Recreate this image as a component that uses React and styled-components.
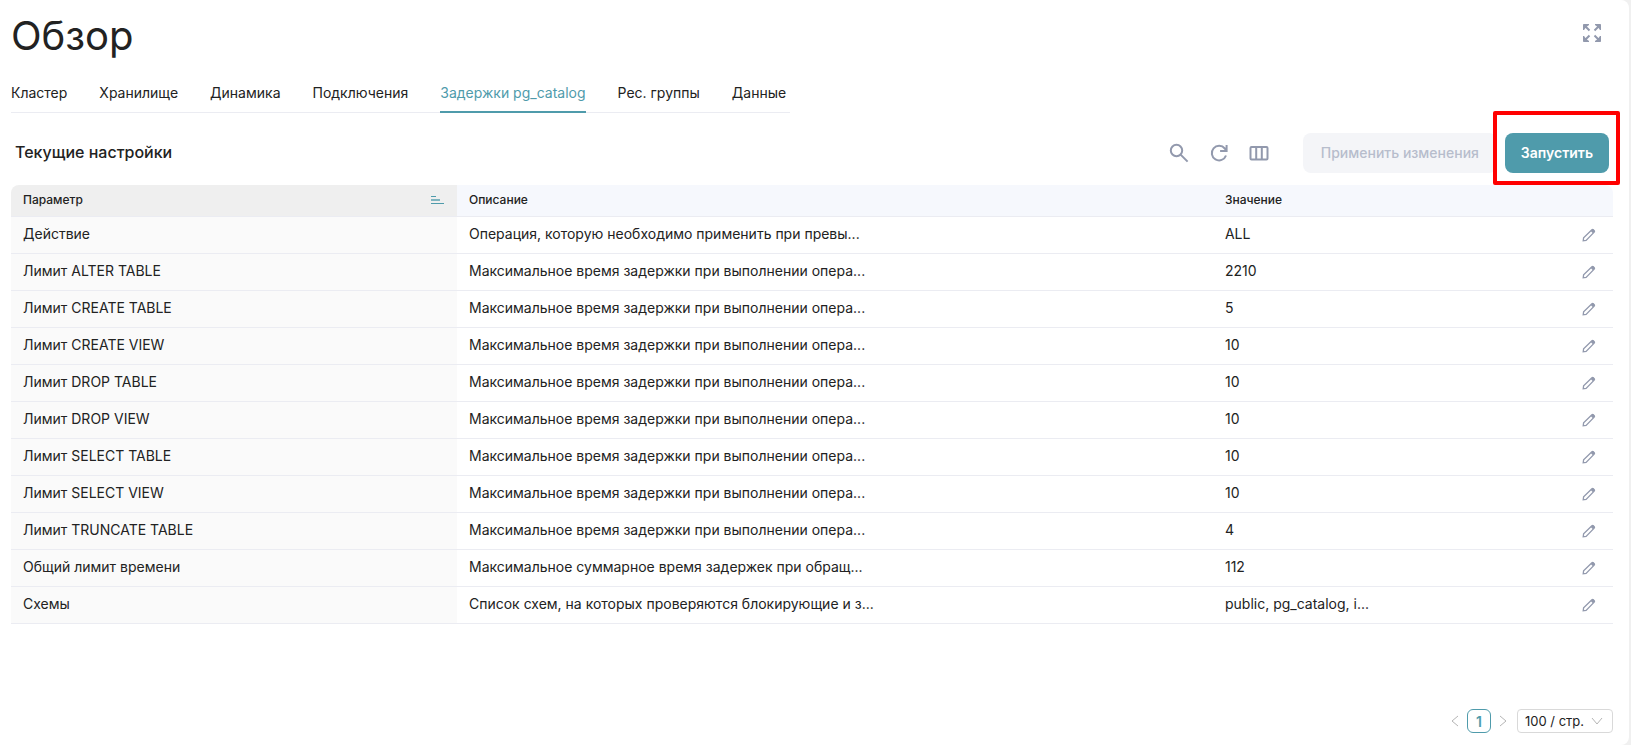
import React, { useState } from 'react'
import styled, { createGlobalStyle, ThemeProvider } from 'styled-components'

const theme = {
  text: '#222222',
  textDisabled: '#b7bdcc',
  accent: '#4f9bab',
  icon: '#9299ad',
  line: '#ebecf2',
  head: '#f6f8fd',
  headSorted: '#efefef',
  cellSorted: '#fafafa',
};

const GlobalStyle = createGlobalStyle`
  * {
    box-sizing: border-box;
  }
  body {
    margin: 0;
    background-color: #f0f0f0;
    font-family: Inter, "Open Sans", sans-serif;
    font-size: 14px;
    color: ${theme.text};
  }
  button, select {
    font-family: inherit;
    font-size: inherit;
    color: inherit;
  }
`;
const Page = styled.main`
  display: flex;
  flex-direction: column;
  min-height: 100vh;
  margin-right: 2px;
  padding: 12px 16px 12px 11px;
  background-color: #ffffff;
  border-radius: 0 8px 8px 0;
`;
const Header = styled.header`
  display: flex;
  justify-content: space-between;
  padding-right: 9px;
`;
const Title = styled.h1`
  margin: 0;
  font-size: 40px;
  font-weight: 400;
  line-height: 48px;
`;
const IconButton = styled.button`
  display: flex;
  align-items: center;
  justify-content: center;
  width: 24px;
  height: 24px;
  padding: 0;
  border: none;
  background-color: transparent;
  color: ${({ theme }) => theme.icon};
  cursor: pointer;
`;
const FullScreen = styled(IconButton)`
  margin-top: 9px;
`;
const Tabs = styled.nav`
  display: flex;
  align-self: flex-start;
  gap: 32px;
  margin-top: 17px;
  padding-right: 4px;
  border-bottom: 1px solid ${({ theme }) => theme.line};
`;
const Tab = styled.a`
  height: 36px;
  margin-bottom: -1px;
  line-height: 32px;
  text-decoration: none;
  color: ${({ theme, $active }) => ($active ? theme.accent : theme.text)};
  border-bottom: 2px solid ${({ theme, $active }) => ($active ? theme.accent : 'transparent')};
`;
const Toolbar = styled.div`
  display: flex;
  align-items: center;
  justify-content: space-between;
  padding: 20px 4px 12px;
`;
const SubTitle = styled.h2`
  margin: 0;
  padding-bottom: 2px;
  font-size: 16px;
  font-weight: 500;
`;
const Actions = styled.div`
  display: flex;
  align-items: center;
  gap: 8px;
`;
const Icons = styled.div`
  display: flex;
  gap: 16px;
  margin-right: 24px;
`;
const Button = styled.button`
  height: 40px;
  min-width: ${({ $primary }) => ($primary ? 104 : 194)}px;
  padding: 0 16px 2px;
  border: none;
  border-radius: 8px;
  font-weight: ${({ $primary }) => ($primary ? 600 : 500)};
  white-space: nowrap;
  background-color: ${({ theme, $primary }) => ($primary ? theme.accent : '#f4f5f8')};
  color: ${({ theme, $primary }) => ($primary ? '#ffffff' : theme.textDisabled)};
`;
const Highlight = styled.div`
  position: relative;
  &::after {
    content: "";
    position: absolute;
    inset: -22px -11px -12px -12px;
    border: 4px solid #ff0000;
    border-radius: 2px;
    pointer-events: none;
  }
`;
const Table = styled.table`
  width: 100%;
  table-layout: fixed;
  border-collapse: separate;
  border-spacing: 0;
`;
const Col = styled.col`
  width: ${({ $width }) => $width};
`;
const Th = styled.th`
  height: 32px;
  padding: 0 12px 2px;
  font-size: 12px;
  font-weight: 500;
  line-height: 16px;
  text-align: left;
  background-color: ${({ theme, $sorted }) => ($sorted ? theme.headSorted : theme.head)};
  border-bottom: 1px solid ${({ theme }) => theme.line};
  &:first-child {
    border-top-left-radius: 8px;
  }
  &:last-child {
    border-top-right-radius: 8px;
  }
`;
const Sorter = styled.div`
  display: flex;
  align-items: center;
  justify-content: space-between;
`;
const Td = styled.td`
  height: 37px;
  padding: 0 12px 2px;
  line-height: 20px;
  white-space: nowrap;
  background-color: ${({ theme, $sorted }) => ($sorted ? theme.cellSorted : 'transparent')};
  border-bottom: 1px solid ${({ theme }) => theme.line};
`;
const EditCell = styled(Td)`
  padding-bottom: 0;
`;
const Pagination = styled.div`
  display: flex;
  align-items: center;
  justify-content: flex-end;
  margin-top: auto;
`;
const PageArrow = styled(IconButton)`
  color: #b5b5b5;
`;
const PageNumber = styled.button`
  width: 24px;
  height: 24px;
  padding: 0;
  border: 1px solid ${({ theme }) => theme.accent};
  border-radius: 6px;
  background-color: #ffffff;
  font-weight: 600;
  color: ${({ theme }) => theme.accent};
`;
const SizeLabel = styled.label`
  display: flex;
  align-items: center;
  margin-left: 2px;
  color: #b5b5b5;
`;
const SizeSelect = styled.select`
  appearance: none;
  width: 96px;
  height: 24px;
  padding: 0 7px;
  border: 1px solid #d9d9d9;
  border-radius: 4px;
  background-color: #ffffff;
  font-size: 13px;
  color: ${({ theme }) => theme.text};
`;
const Arrow = styled.svg`
  margin-left: -22px;
  margin-right: 10px;
  pointer-events: none;
`;

const tabs = ['Кластер', 'Хранилище', 'Динамика', 'Подключения', 'Задержки pg_catalog', 'Рес. группы', 'Данные'];

const limitText = 'Максимальное время задержки при выполнении опера...';
const rows = [
  { name: 'Действие', text: 'Операция, которую необходимо применить при превы...', value: 'ALL' },
  { name: 'Лимит ALTER TABLE', text: limitText, value: '2210' },
  { name: 'Лимит CREATE TABLE', text: limitText, value: '5' },
  { name: 'Лимит CREATE VIEW', text: limitText, value: '10' },
  { name: 'Лимит DROP TABLE', text: limitText, value: '10' },
  { name: 'Лимит DROP VIEW', text: limitText, value: '10' },
  { name: 'Лимит SELECT TABLE', text: limitText, value: '10' },
  { name: 'Лимит SELECT VIEW', text: limitText, value: '10' },
  { name: 'Лимит TRUNCATE TABLE', text: limitText, value: '4' },
  { name: 'Общий лимит времени', text: 'Максимальное суммарное время задержек при обращ...', value: '112' },
  { name: 'Схемы', text: 'Список схем, на которых проверяются блокирующие и з...', value: 'public, pg_catalog, i...' },
];

const ExpandIcon = () => (
  <svg width="20" height="20" viewBox="0 0 20 20" fill="currentColor" stroke="currentColor">
    <path d="M1.500 1.500h5.500l-2 1.500L3 5 1.500 7zM18.500 1.500H13l2 1.500L17 5l1.500 2zM1.500 18.500h5.500l-2-1.500L3 15 1.500 13zM18.500 18.500H13l2-1.500L17 15l1.500-2z" />
    <path d="M3 3l4.500 4.500M17 3l-4.500 4.500M3 17l4.500-4.500M17 17l-4.500-4.500" strokeWidth="2" />
  </svg>
)
const SearchIcon = () => (
  <svg width="20" height="20" viewBox="0 0 20 20" fill="none" stroke="currentColor" strokeWidth="2">
    <circle cx="7.500" cy="7.500" r="5.700" />
    <path d="M11.600 11.600l7 7" />
  </svg>
)
const RefreshIcon = () => (
  <svg width="20" height="20" viewBox="0 0 20 20" fill="none" stroke="currentColor" strokeWidth="2">
    <path d="M17 12.500A7.300 7.300 0 1 1 15.800 5.500L17 7.500M17.600 2v6h-6.500" />
  </svg>
)
const ColumnsIcon = () => (
  <svg width="20" height="20" viewBox="0 0 20 20" fill="none" stroke="currentColor" strokeWidth="2">
    <rect x="1.500" y="4" width="17" height="12.500" rx="1" />
    <path d="M7.200 4v12.500M12.800 4v12.500" />
  </svg>
)
const SortIcon = () => (
  <svg width="14" height="10" viewBox="0 0 14 10" fill="#4f9bab">
    <path d="M0 1h5v1H0zM0 8h13v1H0z" />
    <path d="M0 4h9v2H0z" opacity="0.7" />
  </svg>
)
const PencilIcon = () => (
  <svg width="14" height="14" viewBox="0 0 14 14" fill="none" stroke="currentColor" strokeWidth="1.300">
    <path d="M1.200 12.800l.4-2.900 8.300-8.100a1 1 0 0 1 1.400 0l.9.9a1 1 0 0 1 0 1.400L4.100 12.400z" />
    <path d="M9.400 2.400l2.200 2.200M10.400 1.900l1.700 1.700" strokeWidth="2" />
  </svg>
)
const Chevron = ({ d }) => (
  <svg width="8" height="12" viewBox="0 0 8 12" fill="none" stroke="currentColor">
    <path d={d} />
  </svg>
)

const App = () => {
  const [active, setActive] = useState('Задержки pg_catalog')
  const [size, setSize] = useState('100')

  return (
    <ThemeProvider theme={theme}>
      <GlobalStyle />
      <Page>
        <Header>
          <Title>Обзор</Title>
          <FullScreen aria-label="Во весь экран"><ExpandIcon /></FullScreen>
        </Header>
        <Tabs>
          {tabs.map((tab) => (
            <Tab key={tab} href="#" $active={tab === active} onClick={() => setActive(tab)}>{tab}</Tab>
          ))}
        </Tabs>
        <Toolbar>
          <SubTitle>Текущие настройки</SubTitle>
          <Actions>
            <Icons>
              <IconButton aria-label="Поиск"><SearchIcon /></IconButton>
              <IconButton aria-label="Обновить"><RefreshIcon /></IconButton>
              <IconButton aria-label="Столбцы"><ColumnsIcon /></IconButton>
            </Icons>
            <Button disabled>Применить изменения</Button>
            <Highlight>
              <Button $primary>Запустить</Button>
            </Highlight>
          </Actions>
        </Toolbar>
        <Table>
          <colgroup>
            <Col $width="27.84%" />
            <Col $width="47.19%" />
            <Col />
            <Col $width="48px" />
          </colgroup>
          <thead>
            <tr>
              <Th $sorted>
                <Sorter>Параметр <SortIcon /></Sorter>
              </Th>
              <Th>Описание</Th>
              <Th>Значение</Th>
              <Th />
            </tr>
          </thead>
          <tbody>
            {rows.map((row) => (
              <tr key={row.name}>
                <Td $sorted>{row.name}</Td>
                <Td>{row.text}</Td>
                <Td>{row.value}</Td>
                <EditCell>
                  <IconButton aria-label="Изменить"><PencilIcon /></IconButton>
                </EditCell>
              </tr>
            ))}
          </tbody>
        </Table>
        <Pagination>
          <PageArrow aria-label="Назад"><Chevron d="M7 1L1 6l6 5" /></PageArrow>
          <PageNumber>1</PageNumber>
          <PageArrow aria-label="Вперёд"><Chevron d="M1 1l6 5-6 5" /></PageArrow>
          <SizeLabel>
            <SizeSelect aria-label="Строк на странице" value={size} onChange={(e) => setSize(e.target.value)}>
              <option value="100">100 / стр.</option>
              <option value="50">50 / стр.</option>
            </SizeSelect>
            <Arrow width="12" height="8" viewBox="0 0 12 8" fill="none" stroke="currentColor">
              <path d="M1 1l5 6 5-6" />
            </Arrow>
          </SizeLabel>
        </Pagination>
      </Page>
    </ThemeProvider>
  )
}

export default App
